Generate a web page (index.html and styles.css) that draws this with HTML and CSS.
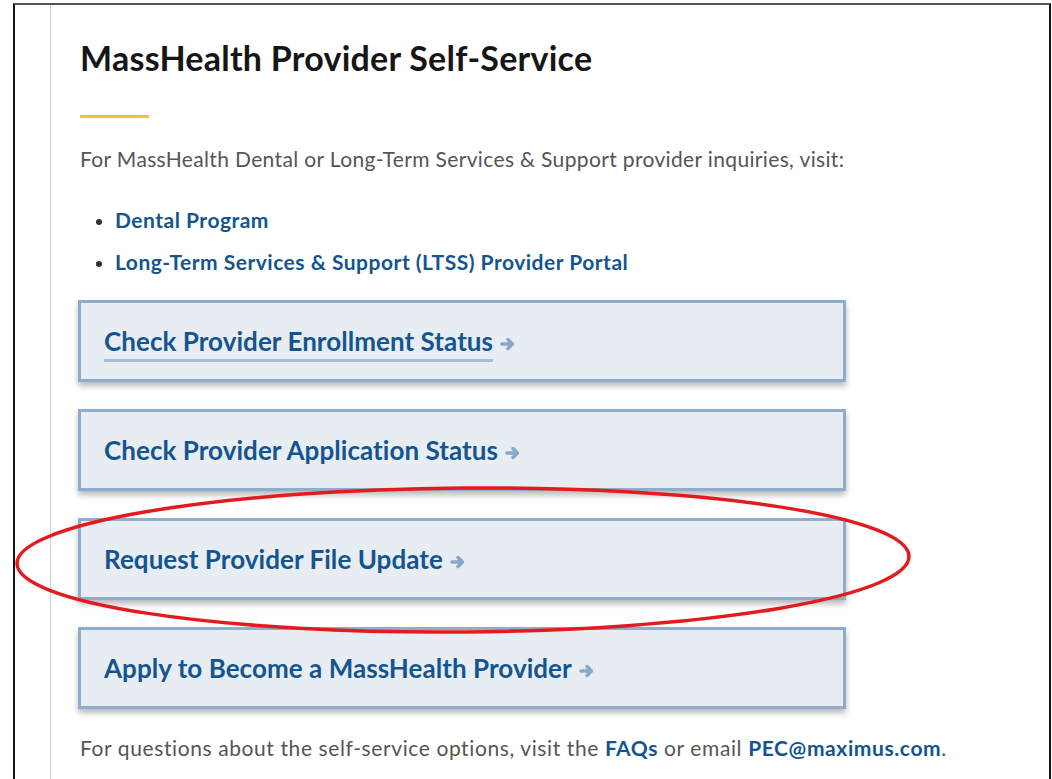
FILE: index.html
```html
<!DOCTYPE html>
<html lang="en">
<head>
<meta charset="utf-8">
<title>MassHealth Provider Self-Service</title>
<link rel="stylesheet" href="styles.css">
</head>
<body>
<div class="frame">
  <main class="panel">
    <h1 class="title">MassHealth Provider Self-Service</h1>
    <hr class="accent">
    <p class="intro">For MassHealth Dental or Long-Term Services &amp; Support provider inquiries, visit:</p>
    <ul class="links">
      <li><a href="#">Dental Program</a></li>
      <li><a href="#">Long-Term Services &amp; Support (LTSS) Provider Portal</a></li>
    </ul>
    <div class="actions">
      <a class="action" href="#"><span class="label is-focused">Check Provider Enrollment Status</span><svg class="arrow" viewBox="0 0 16 14" width="16" height="14"><path d="M2 7h10M8 2.6l4.4 4.4L8 11.4"/></svg></a>
      <a class="action" href="#"><span class="label">Check Provider Application Status</span><svg class="arrow" viewBox="0 0 16 14" width="16" height="14"><path d="M2 7h10M8 2.6l4.4 4.4L8 11.4"/></svg></a>
      <a class="action" href="#"><span class="label">Request Provider File Update</span><svg class="arrow" viewBox="0 0 16 14" width="16" height="14"><path d="M2 7h10M8 2.6l4.4 4.4L8 11.4"/></svg></a>
      <a class="action" href="#"><span class="label">Apply to Become a MassHealth Provider</span><svg class="arrow" viewBox="0 0 16 14" width="16" height="14"><path d="M2 7h10M8 2.6l4.4 4.4L8 11.4"/></svg></a>
    </div>
    <p class="help">For questions about the self-service options, visit the <a href="#">FAQs</a> or email <a href="#">PEC@maximus.com</a>.</p>
  </main>
</div>
<svg class="callout" viewBox="0 0 1052 779" width="1052" height="779">
  <ellipse cx="463" cy="560" rx="446" ry="72" transform="rotate(-0.45 463 560)"/>
</svg>
</body>
</html>
```
FILE: styles.css
```css
html, body {
  margin: 0;
  padding: 0;
  background: #fff;
  overflow: hidden;
}

body {
  font-family: Lato, "Noto Sans", sans-serif;
  color: #141414;
  position: relative;
  width: 1052px;
  height: 779px;
}

.frame {
  margin: 3px 1px 0 13px;
  border: 2px solid #151515;
  border-top-color: #555;
  border-bottom: none;
  height: 776px;
  padding-left: 35px;
  box-sizing: border-box;
}

.panel {
  border-left: 1px solid #cfcfcf;
  height: 100%;
  padding: 0 0 0 29px;
  display: flex;
  flex-direction: column;
}

.title {
  margin: 33px 0 0;
  font-size: 34px;
  line-height: 40px;
  font-weight: 700;
  color: #161616;
  letter-spacing: 0.25px;
}

.accent {
  margin: 37px 0 0;
  width: 69px;
  height: 3px;
  border: none;
  background: #f6c51b;
}

.intro {
  margin: 27px 0 0;
  font-size: 21px;
  line-height: 28px;
  color: #555;
  letter-spacing: 0.35px;
  white-space: nowrap;
}

.links {
  margin: 33px 0 0;
  padding: 0 0 0 35px;
  display: flex;
  flex-direction: column;
  gap: 14px;
}

.links li {
  font-size: 21px;
  line-height: 28px;
  color: #333;
  letter-spacing: 0.5px;
}

.links li::marker {
  font-size: 19px;
}

.links a,
.help a {
  color: #14558f;
  font-weight: 700;
  text-decoration: none;
}

.actions {
  margin: 24px 0 0 -2px;
  display: flex;
  flex-direction: column;
  gap: 27px;
}

.action {
  width: 768px;
  height: 82px;
  box-sizing: border-box;
  border: 3px solid #8eadcd;
  background: #e8edf4;
  box-shadow: 0 4px 6px rgba(0, 0, 0, 0.28);
  display: flex;
  align-items: center;
  gap: 7px;
  padding: 0 0 0 23px;
  text-decoration: none;
  color: #14558f;
}

.label {
  font-size: 26px;
  line-height: 30px;
  font-weight: 700;
  letter-spacing: 0.05px;
}

.label.is-focused {
  text-decoration: underline;
  text-decoration-color: #a6bfd6;
  text-decoration-thickness: 3px;
  text-underline-offset: 8px;
}

.arrow {
  margin-top: 6px;
  fill: none;
  stroke: #89a7c6;
  stroke-width: 3.6;
  stroke-linecap: round;
  stroke-linejoin: round;
}

.help {
  margin: 25px 0 0;
  font-size: 21px;
  line-height: 28px;
  color: #555;
  letter-spacing: 0.6px;
  white-space: nowrap;
}

.callout {
  position: absolute;
  top: 0;
  left: 0;
  pointer-events: none;
}

.callout ellipse {
  fill: none;
  stroke: #e41b1e;
  stroke-width: 3.5;
}
```
